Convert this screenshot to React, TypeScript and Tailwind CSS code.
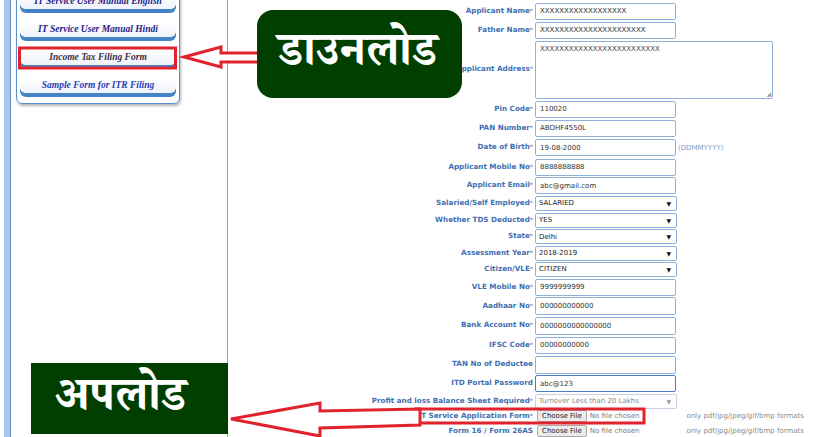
import React from 'react';

type Row = {
  label: string;
  req?: boolean;
  kind: 'input' | 'textarea' | 'select' | 'file';
  value?: string;
  h: string;
  note?: string;
  dim?: boolean;
  focus?: boolean;
  tall?: boolean;
};

const rows: Row[] = [
  { label: 'Applicant Name', req: true, kind: 'input', value: 'XXXXXXXXXXXXXXXXXX', h: 'h-[19px]' },
  { label: 'Father Name', req: true, kind: 'input', value: 'XXXXXXXXXXXXXXXXXXXXXX', h: 'h-[19px]' },
  { label: 'Applicant Address', req: true, kind: 'textarea', value: 'XXXXXXXXXXXXXXXXXXXXXXXXX', h: 'h-[60px]' },
  { label: 'Pin Code', req: true, kind: 'input', value: '110020', h: 'h-[19px]' },
  { label: 'PAN Number', req: true, kind: 'input', value: 'ABOHF4550L', h: 'h-[19.5px]' },
  { label: 'Date of Birth', req: true, kind: 'input', value: '19-08-2000', h: 'h-[19.5px]', note: '(DDMMYYYY)' },
  { label: 'Applicant Mobile No', req: true, kind: 'input', value: '8888888888', h: 'h-[19px]' },
  { label: 'Applicant Email', req: true, kind: 'input', value: 'abc@gmail.com', h: 'h-[18.5px]' },
  { label: 'Salaried/Self Employed', req: true, kind: 'select', value: 'SALARIED', h: 'h-[17px]' },
  { label: 'Whether TDS Deducted', req: true, kind: 'select', value: 'YES', h: 'h-[16.5px]' },
  { label: 'State', req: true, kind: 'select', value: 'Delhi', h: 'h-[16.5px]' },
  { label: 'Assessment Year', req: true, kind: 'select', value: '2018-2019', h: 'h-[16px]' },
  { label: 'Citizen/VLE', req: true, kind: 'select', value: 'CITIZEN', h: 'h-[17px]' },
  { label: 'VLE Mobile No', req: true, kind: 'input', value: '9999999999', h: 'h-[18.5px]' },
  { label: 'Aadhaar No', req: true, kind: 'input', value: '000000000000', h: 'h-[19.5px]', tall: true },
  { label: 'Bank Account No', req: true, kind: 'input', value: '0000000000000000', h: 'h-[19.5px]', tall: true },
  { label: 'IFSC Code', req: true, kind: 'input', value: '00000000000', h: 'h-[19.5px]' },
  { label: 'TAN No of Deductee', kind: 'input', value: '', h: 'h-[19.5px]', tall: true },
  { label: 'ITD Portal Password', kind: 'input', value: 'abc@123', h: 'h-[18.5px]', focus: true },
  { label: 'Profit and loss Balance Sheet Required', req: true, kind: 'select', value: 'Turnover Less than 20 Lakhs', h: 'h-[16px]', dim: true },
  { label: 'IT Service Application Form', req: true, kind: 'file', h: 'h-[14.5px]' },
  { label: 'Form 16 / Form 26AS', kind: 'file', h: 'h-[15px]' },
];

const links = [
  { t: 'IT Service User Manual English', c: 'text-[#1d1d8c]' },
  { t: 'IT Service User Manual Hindi', c: 'text-[#1d1d8c]' },
  { t: 'Income Tax Filing Form', c: 'text-[#3a2f46]' },
  { t: 'Sample Form for ITR Filing', c: 'text-[#2a3cb6]' },
];

const deva = "font-['Noto_Serif_Devanagari','Noto_Sans_Devanagari','Lohit_Devanagari','Noto_Sans',serif]";

function Field({ row }: { row: Row }) {
  if (row.kind === 'textarea') {
    return (
      <div className="relative w-[238px] h-[58px] border border-[#8fb0d8] rounded-[2px] bg-white px-[4px] pt-[2px] text-[7px] text-[#444]">
        {row.value}
        <span className="absolute right-[1px] bottom-[1px] text-[6px] leading-none text-[#999]">◢</span>
      </div>
    );
  }
  if (row.kind === 'select') {
    return (
      <div className={`w-[142px] h-[15px] border rounded-[2px] bg-white flex items-center justify-between pl-[3px] pr-[5px] text-[7px] ${row.dim ? 'border-[#c4d2e4] text-[#888]' : 'border-[#8fb0d8] text-[#222]'}`}>
        <span>{row.value}</span>
        <span className={`text-[6px] ${row.dim ? 'text-[#999]' : 'text-[#111]'}`}>▼</span>
      </div>
    );
  }
  if (row.kind === 'file') {
    return (
      <div className="flex items-center gap-[3px] pl-[2px] text-[7px]">
        <span className="h-[12px] px-[4px] flex items-center bg-[#ebebeb] border border-[#a9a9a9] rounded-[2px] text-[#222]">Choose File</span>
        <span className="text-[#777]">No file chosen</span>
      </div>
    );
  }
  return (
    <div className={`w-[141px] ${row.tall ? 'h-[18px]' : 'h-[17px]'} rounded-[2px] bg-white flex items-center px-[4px] text-[7px] text-[#333] ${row.focus ? 'border-[1.5px] border-[#4a7cc6]' : 'border border-[#8fb0d8]'}`}>
      {row.value}
    </div>
  );
}

export default function App() {
  return (
    <div className="relative w-[825px] h-[437px] overflow-hidden bg-white flex font-['DejaVu_Sans',sans-serif]">
      {/* left strip */}
      <div className="w-[4px] shrink-0 bg-white" />
      <div className="w-[6px] shrink-0 bg-[#abc6e6]" />

      {/* sidebar */}
      <div className="w-[218px] shrink-0 border-l border-l-[#5d8cc3] border-r border-r-[#80a8d6] bg-white">
        <div className="ml-[5px] -mt-[12px] w-[164px] border border-[#5b8fcc] rounded-[6px] shadow-[1px_2px_3px_rgba(0,0,0,0.3)] pt-[5px] pb-[10px] px-[3px] flex flex-col gap-[13px]">
          {links.map((l) => (
            <div
              key={l.t}
              className={`h-[15px] rounded-[6px] bg-linear-to-b from-white to-[#eef2f8] shadow-[0_4px_0_#4683c6] flex items-center justify-center font-['Liberation_Serif',serif] italic font-bold text-[9.5px] ${l.c}`}
            >
              {l.t}
            </div>
          ))}
        </div>
      </div>

      {/* form */}
      <div className="flex-1 flex flex-col pt-[1.5px]">
        {rows.map((r) => (
          <div key={r.label} className={`shrink-0 flex items-center ${r.h}`}>
            <div className="w-[305px] shrink-0 text-right font-bold text-[7.2px] text-[#3f6fb2] whitespace-nowrap">
              {r.label}
              {r.req && <span className="text-[6px] align-top text-[#7a90b0]">*</span>}
            </div>
            <div className="ml-[2px] flex items-center">
              <Field row={r} />
              {r.note && <span className="ml-[2px] text-[7px] text-[#7c9ccc]">{r.note}</span>}
              {r.kind === 'file' && (
                <span className="ml-[47px] text-[7px] text-[#8a8a8a]">only pdf/jpg/jpeg/gif/bmp formats</span>
              )}
            </div>
          </div>
        ))}
      </div>

      {/* annotations */}
      <svg className="absolute inset-0 pointer-events-none" width="825" height="437" viewBox="0 0 825 437">
        <rect x="19.5" y="48" width="156" height="20" fill="none" stroke="#e1232d" strokeWidth="3" />
        <polygon points="184,57 221,47 221,53 266,53 266,62 221,62 221,67" fill="white" stroke="#e1232d" strokeWidth="3" strokeLinejoin="miter" />
        <rect x="416" y="409" width="228" height="14" fill="none" stroke="#e1232d" strokeWidth="3" />
        <polygon points="231,419 320,403 320,411 420,409 420,425 320,428 320,436" fill="white" stroke="#e1232d" strokeWidth="3" />
      </svg>

      <div className={`absolute left-[257px] top-[10px] w-[205px] h-[88px] rounded-[16px] bg-[#013f01] flex items-center justify-center pt-[6px] pr-[4px] text-white text-[47px] font-bold leading-none ${deva}`}>
        डाउनलोड
      </div>
      <div className={`absolute left-[31px] top-[363px] w-[197px] h-[71px] bg-[#013f01] flex items-center justify-start pl-[24px] pt-[8px] text-white text-[47px] font-bold leading-none ${deva}`}>
        अपलोड
      </div>
    </div>
  );
}
